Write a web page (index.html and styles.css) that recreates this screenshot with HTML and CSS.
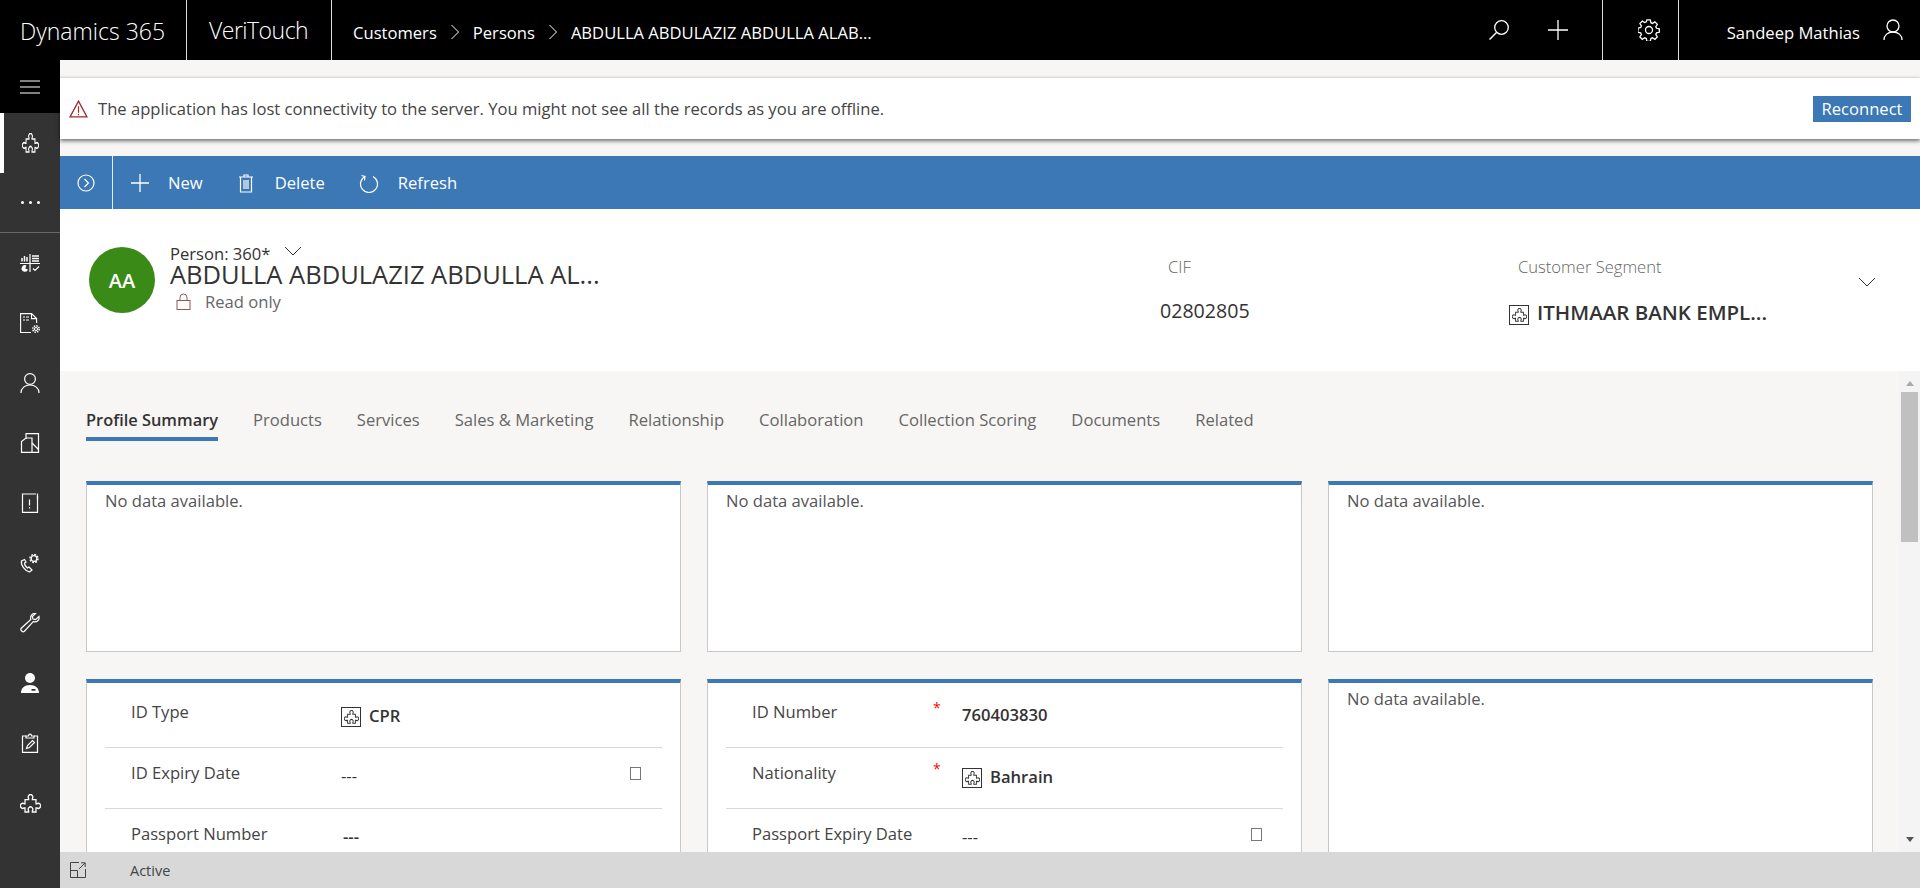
FILE: index.html
```html
<!DOCTYPE html>
<html lang="en">
<head>
    <meta charset="UTF-8">
    <title>ABDULLA ABDULAZIZ ABDULLA ALAB... - Dynamics 365</title>
    <link rel="stylesheet" href="styles.css">
</head>
<body>
    <svg class="defs" width="0" height="0">
        <symbol id="puzzle" viewBox="-1.5 -.5 23 18.5" preserveAspectRatio="none">
            <path fill="none" stroke="currentColor" stroke-width="1.4" d="M4 5H8V4a2.5 2.5 0 1 1 4 0V5H16V9H17a2.5 2.5 0 1 1 0 4H16V17H12V16a2.5 2.5 0 1 0-4 0V17H4V13H3a2.5 2.5 0 1 1 0-4H4Z"/>
        </symbol>
    </svg>

    <header class="topbar">
        <div class="brand">Dynamics 365</div>
        <div class="app">VeriTouch</div>
        <nav class="crumbs">
            <span>Customers</span>
            <svg class="crumb-sep" viewBox="0 0 10 16"><path d="M1.5 1l7 7-7 7" fill="none" stroke="currentColor"/></svg>
            <span>Persons</span>
            <svg class="crumb-sep" viewBox="0 0 10 16"><path d="M1.5 1l7 7-7 7" fill="none" stroke="currentColor"/></svg>
            <span>ABDULLA ABDULAZIZ ABDULLA ALAB...</span>
        </nav>
        <div class="top-actions">
            <svg class="top-icon" viewBox="0 0 22 22"><circle cx="13.5" cy="8.5" r="6.8" fill="none" stroke="currentColor" stroke-width="1.3"/><path d="M8.5 13.5L1.5 20.5" stroke="currentColor" stroke-width="1.5"/></svg>
            <svg class="top-icon" viewBox="0 0 22 22"><path d="M11 1v20M1 11h20" stroke="currentColor" stroke-width="1.3"/></svg>
        </div>
        <div class="top-gear">
            <svg class="top-icon" viewBox="0 0 22 22"><g fill="none" stroke="currentColor" stroke-width="1.3"><circle cx="11" cy="11" r="3.5"/><path d="M9.3 1.3h3.4l.6 2.8 1.6.7 2.4-1.5 2.4 2.4-1.5 2.4.7 1.6 2.8.6v3.4l-2.8.6-.7 1.6 1.5 2.4-2.4 2.4-2.4-1.5-1.6.7-.6 2.8H9.3l-.6-2.8-1.6-.7-2.4 1.5-2.4-2.4 1.5-2.4-.7-1.6-2.8-.6V9.5l2.8-.6.7-1.6-1.5-2.4 2.4-2.4 2.4 1.5 1.6-.7z" transform="translate(-.4 -.4)"/></g></svg>
        </div>
        <div class="top-user">
            <span>Sandeep Mathias</span>
            <svg class="top-icon" viewBox="0 0 22 22"><g fill="none" stroke="currentColor" stroke-width="1.3"><circle cx="11" cy="7" r="6"/><path d="M2 21c0-5 4-8 9-8s9 3 9 8"/></g></svg>
        </div>
    </header>

    <div class="shell">
        <nav class="sidebar">
            <div class="side-menu">
                <svg viewBox="0 0 20 14" class="side-burger"><path d="M0 1h20M0 7h20M0 13h20" stroke="currentColor" stroke-width="1.2"/></svg>
            </div>
            <div class="side-item selected"><svg class="side-puzzle"><use href="#puzzle"/></svg></div>
            <div class="side-item side-more"><span class="dot"></span><span class="dot"></span><span class="dot"></span></div>
            <div class="side-item">
                <svg class="side-icon" viewBox="0 0 20 20"><g fill="none" stroke="currentColor" stroke-width="1.2"><path d="M0 10.5h20M10 1v18"/><path d="M2 8.5V5M4.5 8.5V3M7 8.5V4M12 3h7M12 5.5h7M12 8h7" stroke-width="1.5"/><path d="M13 15.5l2 2 4-4"/></g><path d="M6.5 12.5a3.3 3.3 0 1 0 1.5 4l-2.8-1z" fill="currentColor"/></svg>
            </div>
            <div class="side-item">
                <svg class="side-icon" viewBox="0 0 20 20"><g fill="none" stroke="currentColor" stroke-width="1.1"><path d="M11 19.5H.6V.6h11l5 5V10M11.5.6v5h5"/><path d="M3 4h2M6 4h3M3 7h2M6 7h3"/><circle cx="16" cy="16" r="1.5"/><circle cx="16" cy="16" r="3.2" stroke-dasharray="1.5 1" stroke-width="1.5"/></g></svg>
            </div>
            <div class="side-item">
                <svg class="side-icon" viewBox="0 0 20 20"><g fill="none" stroke="currentColor" stroke-width="1.2"><circle cx="10" cy="6" r="5.4"/><path d="M1 20c0-5 4-8 9-8s9 3 9 8"/></g></svg>
            </div>
            <div class="side-item">
                <svg class="side-icon" viewBox="0 0 20 20"><g fill="none" stroke="currentColor" stroke-width="1.2"><path d="M6 6V.6h12.5v18.8H1.5V8.5L6 5h6v14.4"/><path d="M12 10l6.5 6.5"/></g></svg>
            </div>
            <div class="side-item">
                <svg class="side-icon" viewBox="0 0 20 20"><g fill="none" stroke="currentColor" stroke-width="1.2"><path d="M16 1H2.5v18.4h15V3"/><path d="M17.5 .5v6"/><path d="M9.5 6.5v6M9.5 14v1.5"/></g></svg>
            </div>
            <div class="side-item">
                <svg class="side-icon" viewBox="0 0 20 20"><g fill="none" stroke="currentColor" stroke-width="1.2"><path d="M4.5 6.5L1.5 8c-1 4 3.5 10 8 11l2.5-2-3-3-1.5 1c-1.5-1-3-3.5-3-5l1.5-1z"/><circle cx="14" cy="5.5" r="2.8"/><circle cx="14" cy="5.5" r="4" stroke-dasharray="1.8 1.3" stroke-width="1.5"/></g></svg>
            </div>
            <div class="side-item">
                <svg class="side-icon" viewBox="0 0 20 20"><path d="M19 3.5l-3.5 3.2-2.5-.7-.7-2.5L15.5.6C12.5 0 9.8 2.5 10.8 6.5L1 15.5c-1 1.5 1.7 4 3.2 3l9-9.8c4 1 6.5-1.8 5.8-5.2z" fill="none" stroke="currentColor" stroke-width="1.2"/></svg>
            </div>
            <div class="side-item">
                <svg class="side-icon" viewBox="0 0 20 20"><circle cx="10" cy="5" r="5" fill="currentColor"/><path fill="currentColor" fill-rule="evenodd" d="M1 20c0-5 3.5-8 9-8s9 3 9 8zM11.5 16v1.8h4V16z"/></svg>
            </div>
            <div class="side-item">
                <svg class="side-icon" viewBox="0 0 20 20"><g fill="none" stroke="currentColor" stroke-width="1.2"><path d="M6 3H2.5v16.4h15V3H14"/><path d="M6 5V3h2.5c0-2.5 3-2.5 3 0H14v2z"/><path d="M6.5 15.5l1-3 5-5 2 2-5 5z"/></g></svg>
            </div>
            <div class="side-item">
                <svg class="side-puzzle-wide"><use href="#puzzle"/></svg>
            </div>
        </nav>

        <main class="main">
            <div class="notice-wrap">
                <div class="notice">
                    <svg class="notice-icon" viewBox="0 0 18 17"><path d="M9 1L1 16h16z" fill="none" stroke="#a4262c" stroke-width="1.2"/><path d="M9 6v6M9 13v1.5" stroke="#a4262c" stroke-width="1.1"/></svg>
                    <span class="notice-text">The application has lost connectivity to the server. You might not see all the records as you are offline.</span>
                    <button class="reconnect" type="button">Reconnect</button>
                </div>
            </div>

            <div class="cmdbar">
                <div class="cmd-toggle">
                    <svg viewBox="0 0 18 18" class="cmd-icon-sm"><circle cx="9" cy="9" r="8" fill="none" stroke="currentColor" stroke-width="1.2"/><path d="M7.5 5l4 4-4 4" fill="none" stroke="currentColor" stroke-width="1.2"/></svg>
                </div>
                <div class="cmd cmd-new">
                    <svg viewBox="0 0 20 20" class="cmd-icon"><path d="M10 1v18M1 10h18" stroke="currentColor" stroke-width="1.3"/></svg>
                    <span>New</span>
                </div>
                <div class="cmd cmd-delete">
                    <svg viewBox="0 0 20 20" class="cmd-icon"><g fill="none" stroke="currentColor" stroke-width="1.2"><path d="M3 4h14M8 4V2h4v2M4.5 4v15h11V4"/><path d="M8 7v9M10 7v9M12 7v9"/></g></svg>
                    <span>Delete</span>
                </div>
                <div class="cmd cmd-refresh">
                    <svg viewBox="0 0 20 20" class="cmd-icon"><g fill="none" stroke="currentColor" stroke-width="1.2"><path d="M6 3.5a8.5 8.5 0 1 0 8 0"/><path d="M2.5 2.5L6 3.5 5.5 7.5"/></g></svg>
                    <span>Refresh</span>
                </div>
            </div>

            <section class="rec-head">
                <div class="avatar">AA</div>
                <div class="rec-title">
                    <div class="rec-form">Person: 360*
                        <svg class="chev chev-form" viewBox="0 0 18 10"><path d="M1 1l8 8 8-8" fill="none" stroke="currentColor"/></svg>
                    </div>
                    <h1 class="rec-name">ABDULLA ABDULAZIZ ABDULLA AL...</h1>
                    <div class="rec-lock">
                        <svg class="lock" viewBox="0 0 15 17"><g fill="none" stroke="#8a5a5a" stroke-width="1"><rect x="1" y="7.5" width="13" height="9"/><path d="M4 7.5V4.5a3.5 3.5 0 0 1 7 0v3"/></g></svg>
                        Read only
                    </div>
                </div>
                <div class="head-field head-cif">
                    <div class="head-label">CIF</div>
                    <div class="head-value">02802805</div>
                </div>
                <div class="head-field head-seg">
                    <div class="head-label">Customer Segment</div>
                    <div class="head-value head-link">
                        <span class="lookup"><svg><use href="#puzzle"/></svg></span>
                        ITHMAAR BANK EMPL...
                    </div>
                </div>
                <svg class="chev chev-head" viewBox="0 0 18 10"><path d="M1 1l8 8 8-8" fill="none" stroke="currentColor"/></svg>
            </section>

            <section class="body">
                <div class="scroll">
                    <div class="tabs">
                        <span class="tab active">Profile Summary</span>
                        <span class="tab">Products</span>
                        <span class="tab">Services</span>
                        <span class="tab">Sales &amp; Marketing</span>
                        <span class="tab">Relationship</span>
                        <span class="tab">Collaboration</span>
                        <span class="tab">Collection Scoring</span>
                        <span class="tab">Documents</span>
                        <span class="tab">Related</span>
                    </div>
                    <div class="cards">
                        <div class="card card-empty">No data available.</div>
                        <div class="card card-empty">No data available.</div>
                        <div class="card card-empty">No data available.</div>
                        <div class="card">
                            <div class="field">
                                <span class="f-label">ID Type</span><span></span>
                                <span class="f-value f-link"><span class="lookup"><svg><use href="#puzzle"/></svg></span>CPR</span>
                            </div>
                            <div class="field">
                                <span class="f-label">ID Expiry Date</span><span></span>
                                <span class="f-value">---</span><span class="cal"></span>
                            </div>
                            <div class="field">
                                <span class="f-label">Passport Number</span><span></span>
                                <span class="f-value f-strong f-nudge">---</span>
                            </div>
                        </div>
                        <div class="card">
                            <div class="field">
                                <span class="f-label">ID Number</span><span class="req">*</span>
                                <span class="f-value f-strong">760403830</span>
                            </div>
                            <div class="field">
                                <span class="f-label">Nationality</span><span class="req">*</span>
                                <span class="f-value f-link"><span class="lookup"><svg><use href="#puzzle"/></svg></span>Bahrain</span>
                            </div>
                            <div class="field">
                                <span class="f-label">Passport Expiry Date</span><span></span>
                                <span class="f-value">---</span><span class="cal"></span>
                            </div>
                        </div>
                        <div class="card card-empty">No data available.</div>
                    </div>
                </div>
                <div class="scrollbar">
                    <span class="arrow-up"></span>
                    <span class="thumb"></span>
                    <span class="arrow-down"></span>
                </div>
            </section>

            <footer class="status">
                <svg class="status-icon" viewBox="0 0 16 16"><g fill="none" stroke="#444" stroke-width="1"><path d="M9 .5H.5v15h15V7"/><path d="M.5 8.5h7v7M9 7l6-6M11 .8h4.2V5"/></g></svg>
                <span>Active</span>
            </footer>
        </main>
    </div>
</body>
</html>
```

FILE: styles.css
```css
* {
    box-sizing: border-box;
}
html, body {
    height: 100%;
}
body {
    margin: 0;
    height: 888px;
    overflow: hidden;
    display: flex;
    flex-direction: column;
    font-family: 'Open Sans', 'Noto Sans', sans-serif;
    font-size: 16.6px;
    color: #333;
    background: #f7f6f4;
}
.defs {
    position: absolute;
}

/* top bar */
.topbar {
    height: 60px;
    flex: none;
    display: flex;
    align-items: stretch;
    background: #000;
    color: #fff;
}
.brand {
    width: 187px;
    padding-left: 20px;
    font-size: 23px;
    font-weight: 300;
    line-height: 62px;
    border-right: 1px solid #ddd;
}
.app {
    width: 145px;
    padding-left: 22px;
    font-size: 23px;
    font-weight: 300;
    line-height: 60px;
    letter-spacing: -0.5px;
    border-right: 1px solid #ddd;
}
.crumbs {
    flex: 1;
    display: flex;
    align-items: center;
    padding-left: 21px;
    padding-top: 5px;
    white-space: nowrap;
}
.crumb-sep {
    width: 10px;
    height: 16px;
    margin: 0 13px 2px 13px;
}
.top-actions {
    width: 153px;
    flex: none;
    display: flex;
    align-items: center;
    gap: 37px;
    padding-left: 38px;
    border-right: 1px solid #ddd;
}
.top-icon {
    width: 22px;
    height: 22px;
    flex: none;
}
.top-gear {
    width: 76px;
    flex: none;
    display: flex;
    align-items: center;
    justify-content: center;
    padding-left: 16px;
    border-right: 1px solid #ddd;
}
.top-user {
    width: 241px;
    flex: none;
    display: flex;
    align-items: center;
    justify-content: flex-end;
    gap: 22px;
    padding-right: 16px;
}
.top-user span {
    padding-top: 4px;
}

/* left nav */
.shell {
    flex: 1;
    display: flex;
    min-height: 0;
}
.sidebar {
    width: 60px;
    flex: none;
    background: #333;
    color: #fff;
    display: flex;
    flex-direction: column;
}
.side-menu {
    height: 53px;
    background: #000;
    display: flex;
    align-items: center;
    justify-content: center;
}
.side-burger {
    width: 20px;
    height: 14px;
}
.side-item {
    height: 60px;
    flex: none;
    display: flex;
    align-items: center;
    justify-content: center;
}
.side-item.selected {
    border-left: 4px solid #fff;
    padding-right: 4px;
}
.side-more {
    gap: 5px;
    border-bottom: 1px solid #666;
}
.dot {
    width: 3px;
    height: 3px;
    border-radius: 50%;
    background: #fff;
}
.side-icon {
    width: 20px;
    height: 20px;
}
.side-puzzle {
    width: 17px;
    height: 20px;
}
.side-puzzle-wide {
    width: 21px;
    height: 19px;
}

/* main column */
.main {
    flex: 1;
    min-width: 0;
    display: flex;
    flex-direction: column;
}
.notice-wrap {
    padding: 18px 0 17px;
    flex: none;
}
.notice {
    height: 61px;
    display: flex;
    align-items: center;
    padding: 0 9px 0 9px;
    background: #fff;
    box-shadow: 0 -1px 2px rgba(0, 0, 0, 0.08), 0 2px 4px rgba(0, 0, 0, 0.55);
}
.notice-icon {
    width: 19px;
    height: 18px;
    flex: none;
    margin-right: 10px;
}
.notice-text {
    flex: 1;
    color: #444;
}
.reconnect {
    width: 98px;
    height: 26px;
    padding: 0;
    border: none;
    background: #3b78b5;
    color: #fff;
    font: inherit;
}
.cmdbar {
    height: 53px;
    flex: none;
    display: flex;
    align-items: center;
    background: #3b78b5;
    color: #fff;
}
.cmd-toggle {
    width: 53px;
    height: 100%;
    display: flex;
    align-items: center;
    justify-content: center;
    border-right: 1px solid #e6eef6;
}
.cmd-icon-sm {
    width: 18px;
    height: 18px;
}
.cmd {
    display: flex;
    align-items: center;
}
.cmd-icon {
    width: 20px;
    height: 20px;
    margin-right: 18px;
}
.cmd-new {
    margin-left: 17px;
}
.cmd-delete {
    margin-left: 33px;
}
.cmd-delete .cmd-icon {
    margin-right: 19px;
}
.cmd-refresh {
    margin-left: 34px;
}
.cmd-refresh .cmd-icon {
    margin-right: 19px;
}

/* record header */
.rec-head {
    height: 162px;
    flex: none;
    display: flex;
    align-items: flex-start;
    padding-left: 29px;
    background: #fff;
}
.avatar {
    width: 66px;
    height: 66px;
    margin-top: 38px;
    flex: none;
    border-radius: 50%;
    background: #3a8a17;
    color: #fff;
    font-size: 20px;
    font-weight: 600;
    line-height: 68px;
    text-align: center;
}
.rec-title {
    width: 1005px;
    flex: none;
    padding: 34px 0 0 15px;
}
.rec-form {
    display: flex;
    align-items: center;
    height: 20px;
    color: #333;
}
.chev {
    color: #333;
    width: 18px;
    height: 10px;
}
.chev-form {
    margin-left: 14px;
    margin-bottom: 4px;
}
.rec-name {
    margin: 0;
    font-size: 25.5px;
    font-weight: 400;
    line-height: 23px;
    white-space: nowrap;
}
.rec-lock {
    display: flex;
    align-items: center;
    margin: 4px 0 0 6px;
    color: #666;
}
.lock {
    width: 15px;
    height: 17px;
    margin-right: 14px;
}
.head-field {
    flex: none;
    padding-top: 47px;
}
.head-cif {
    width: 349px;
}
.head-seg {
    width: 349px;
}
.head-cif .head-label {
    padding-left: 8px;
}
.head-seg .head-label {
    padding-left: 9px;
}
.head-label {
    line-height: 22px;
    color: #666;
    font-weight: 300;
}
.head-value {
    margin-top: 22px;
    font-size: 19.6px;
    line-height: 22px;
}
.head-link {
    display: flex;
    align-items: center;
    margin-top: 21px;
    font-size: 20.5px;
    font-weight: 600;
    color: #333;
}
.head-link .lookup {
    margin-top: 6px;
}
.chev-head {
    margin-top: 68px;
}
.lookup {
    width: 20px;
    height: 20px;
    flex: none;
    margin-right: 8px;
    display: flex;
    align-items: center;
    justify-content: center;
    border: 1px solid #333;
    color: #333;
}
.lookup svg {
    width: 15px;
    height: 14px;
}

/* tabs + cards */
.body {
    flex: 1;
    min-height: 0;
    display: flex;
}
.scroll {
    flex: 1;
    min-width: 0;
    padding: 38px 0 0 26px;
    overflow: hidden;
}
.tabs {
    display: flex;
    gap: 35px;
    color: #666;
    margin-bottom: 40px;
}
.tab {
    padding-bottom: 6px;
    line-height: 22px;
    border-bottom: 4px solid transparent;
    white-space: nowrap;
}
.tab.active {
    color: #333;
    font-size: 16.4px;
    font-weight: 600;
    border-bottom-color: #3b78b5;
}
.cards {
    display: grid;
    grid-template-columns: 595px 595px 545px;
    grid-auto-rows: 171px;
    gap: 27px 26px;
}
.cards .card:nth-child(n+4) {
    height: 300px;
}
.card {
    background: #fff;
    border: 1px solid #c8c8c8;
    border-top: 4px solid #3b78b5;
    padding: 4px 18px 0;
}
.card-empty {
    padding: 5px 18px 0;
    color: #555;
    line-height: 22px;
}
.field {
    height: 61px;
    display: grid;
    grid-template-columns: 181px 29px 1fr auto;
    padding: 14px 21px 0 26px;
    border-bottom: 1px solid #d8d8d8;
}
.f-label {
    line-height: 22px;
    color: #444;
}
.req {
    color: #f00;
    font-size: 14px;
    line-height: 14px;
}
.f-value {
    display: flex;
    align-items: flex-start;
    line-height: 22px;
    padding-top: 3px;
}
.f-link {
    font-weight: 600;
    line-height: 17px;
    padding-top: 6px;
}
.f-strong {
    font-weight: 600;
}
.f-nudge {
    padding-left: 2px;
}
.cal {
    width: 11px;
    height: 13px;
    margin-top: 5px;
    border: 1px solid #777;
    background: #fff;
}

/* scrollbar */
.scrollbar {
    width: 21px;
    flex: none;
    display: flex;
    flex-direction: column;
    align-items: center;
    background: #f4f4f4;
    padding-top: 10px;
}
.arrow-up {
    width: 0;
    height: 0;
    border: 4px solid transparent;
    border-top: none;
    border-bottom: 5px solid #aaa;
}
.thumb {
    width: 17px;
    height: 150px;
    margin-top: 6px;
    background: #c0c0c0;
}
.arrow-down {
    width: 0;
    height: 0;
    margin-top: auto;
    margin-bottom: 10px;
    border: 4px solid transparent;
    border-bottom: none;
    border-top: 5px solid #555;
}
.status {
    height: 36px;
    flex: none;
    display: flex;
    align-items: center;
    padding-left: 10px;
    background: #d8d8d8;
    color: #444;
    font-size: 14.5px;
}
.status-icon {
    width: 16px;
    height: 16px;
    margin-right: 44px;
}
```
